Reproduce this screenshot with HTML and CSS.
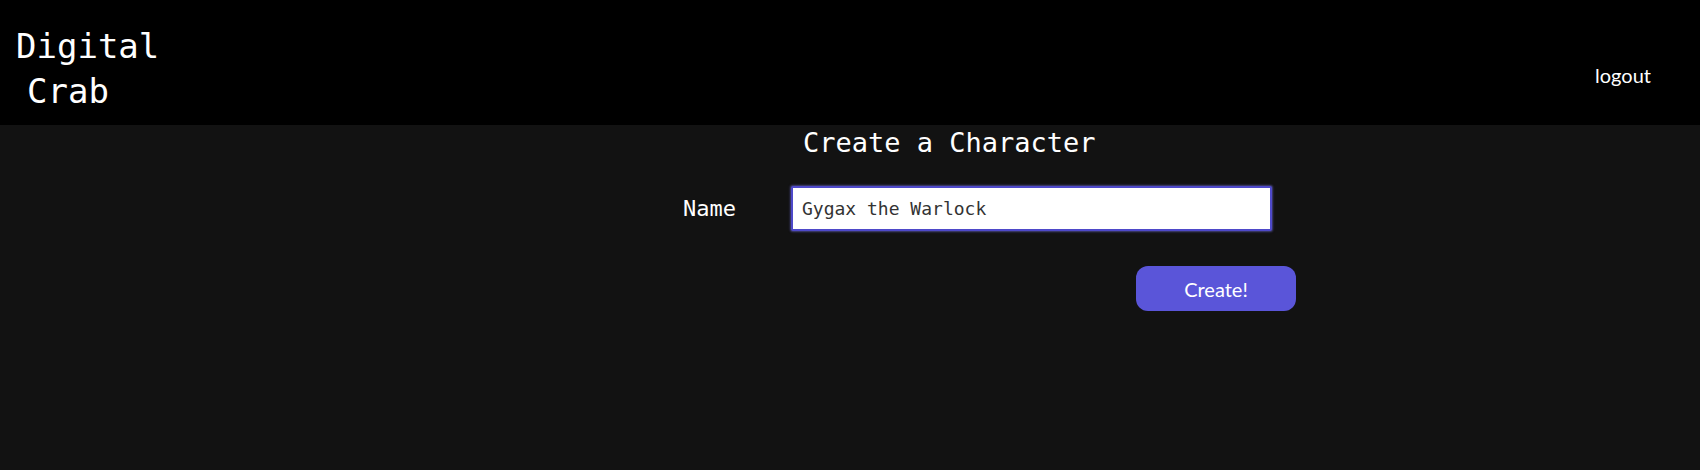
FILE: index.html
```html
<!DOCTYPE html>
<html>
<head>
<meta charset="utf-8">
<link rel="stylesheet" href="styles.css">
</head>
<body>
<header class="topbar">
  <div class="brand"><span class="brand-line">Digital</span><span class="brand-line brand-indent">Crab</span></div>
  <a class="logout" href="#">logout</a>
</header>
<main class="content">
  <form class="char-form">
    <h2 class="title">Create a Character</h2>
    <div class="field">
      <label class="label" for="name">Name</label>
      <input class="input" id="name" type="text" value="Gygax the Warlock" autofocus>
    </div>
    <div class="actions">
      <button class="btn" type="button">Create!</button>
    </div>
  </form>
</main>
</body>
</html>
```
FILE: styles.css
```css
html, body {
  margin: 0;
  padding: 0;
}
body {
  background: #121212;
  color: #fff;
  font-family: "DejaVu Sans Mono", monospace;
  height: 470px;
  overflow: hidden;
}
.topbar {
  background: #000;
  height: 125px;
  box-sizing: border-box;
  display: flex;
  justify-content: space-between;
  align-items: flex-start;
  padding: 24px 49px 0 16px;
}
.brand {
  font-size: 34px;
  line-height: 45px;
  color: #fff;
  display: flex;
  flex-direction: column;
}
.brand-indent {
  padding-left: 11px;
}
.logout {
  font-family: "Lato", sans-serif;
  font-size: 20px;
  color: #fff;
  text-decoration: none;
  margin-top: 39px;
}
.content {
  padding-top: 2px;
}
.char-form {
  margin-left: 683px;
  width: 613px;
  display: flex;
  flex-direction: column;
}
.title {
  margin: 0 0 27px 120px;
  font-size: 27px;
  line-height: 32px;
  font-weight: normal;
  color: #fff;
}
.field {
  display: flex;
  align-items: center;
}
.label {
  width: 108px;
  font-size: 22px;
  color: #fff;
}
.input {
  width: 481px;
  height: 45px;
  box-sizing: border-box;
  border: 2px solid #4e49c9;
  border-radius: 2px;
  box-shadow: 0 0 2px 1px rgba(120, 115, 230, 0.5);
  background: #fff;
  color: #333;
  caret-color: #222;
  font-family: "DejaVu Sans Mono", monospace;
  font-size: 18px;
  padding: 0 9px;
  outline: none;
}
.actions {
  display: flex;
  justify-content: flex-end;
  margin-top: 35px;
}
.btn {
  width: 160px;
  height: 45px;
  background: #5a55d9;
  border: none;
  border-radius: 12px;
  color: #fff;
  font-family: "Lato", sans-serif;
  font-size: 20px;
  padding: 0;
}
```
